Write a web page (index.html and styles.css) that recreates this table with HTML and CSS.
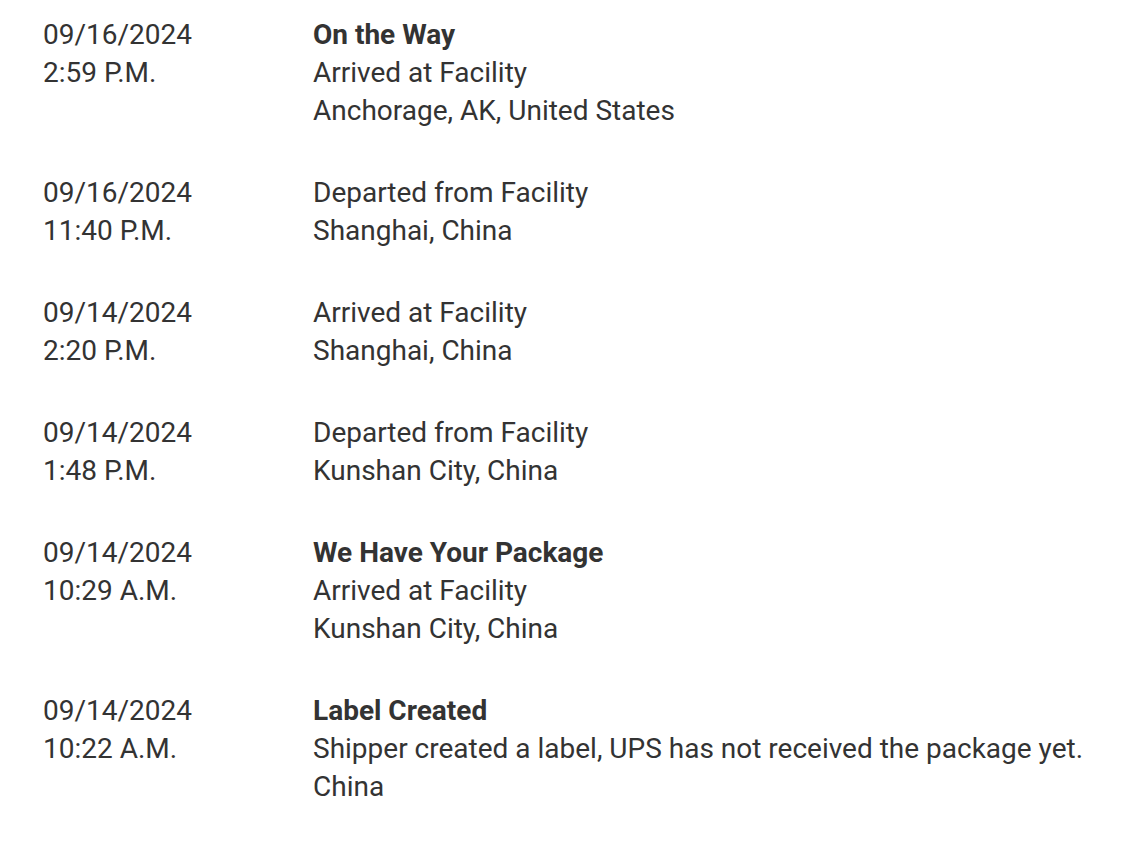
FILE: index.html
```html
<!DOCTYPE html>
<html>
<head>
<meta charset="utf-8">
<link rel="stylesheet" href="styles.css">
</head>
<body>
<div class="timeline">
  <div class="row">
    <div class="when"><div>09/16/2024</div><div>2:59 P.M.</div></div>
    <div class="what"><div class="status">On the Way</div><div>Arrived at Facility</div><div>Anchorage, AK, United States</div></div>
  </div>
  <div class="row">
    <div class="when"><div>09/16/2024</div><div>11:40 P.M.</div></div>
    <div class="what"><div>Departed from Facility</div><div>Shanghai, China</div></div>
  </div>
  <div class="row">
    <div class="when"><div>09/14/2024</div><div>2:20 P.M.</div></div>
    <div class="what"><div>Arrived at Facility</div><div>Shanghai, China</div></div>
  </div>
  <div class="row">
    <div class="when"><div>09/14/2024</div><div>1:48 P.M.</div></div>
    <div class="what"><div>Departed from Facility</div><div>Kunshan City, China</div></div>
  </div>
  <div class="row">
    <div class="when"><div>09/14/2024</div><div>10:29 A.M.</div></div>
    <div class="what"><div class="status">We Have Your Package</div><div>Arrived at Facility</div><div>Kunshan City, China</div></div>
  </div>
  <div class="row">
    <div class="when"><div>09/14/2024</div><div>10:22 A.M.</div></div>
    <div class="what"><div class="status">Label Created</div><div>Shipper created a label, UPS has not received the package yet.</div><div>China</div></div>
  </div>
</div>
</body>
</html>
```
FILE: styles.css
```css
html, body {
  margin: 0;
  padding: 0;
  background: #ffffff;
}
body {
  font-family: Roboto, "Liberation Sans", sans-serif;
  font-size: 28px;
  line-height: 38px;
  color: #333333;
}
.timeline {
  display: flex;
  flex-direction: column;
  gap: 44px;
  padding: 16px 0 0 43px;
}
.row {
  display: flex;
}
.when {
  width: 270px;
  flex: none;
}
.what {
  flex: 1;
}
.status {
  font-weight: 700;
}
```
